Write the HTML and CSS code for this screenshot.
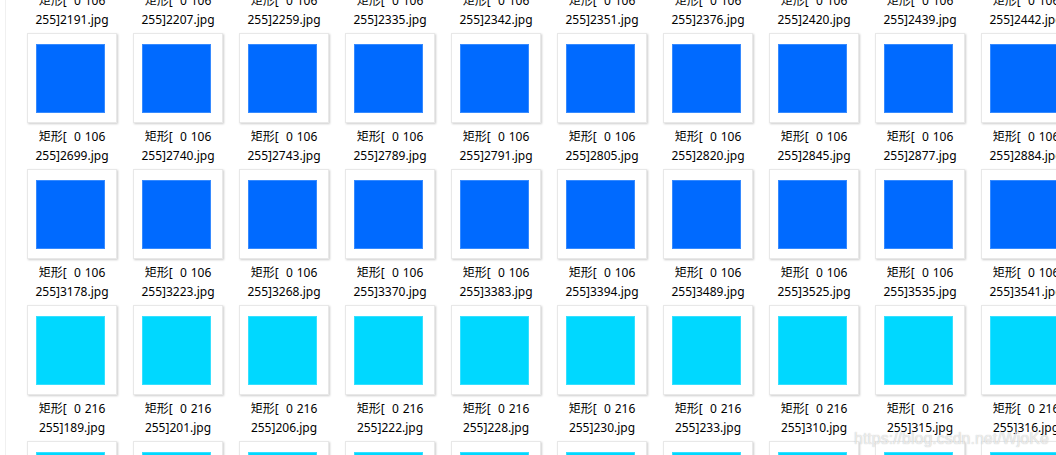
FILE: index.html
```html
<!DOCTYPE html>
<html lang="zh-CN">
<head>
<meta charset="utf-8">
<title>矩形 thumbnails</title>
<link rel="stylesheet" href="styles.css">
</head>
<body>
<div class="pane">
  <div class="grid">
    <div class="item"><div class="thumb"><div class="sq blue"></div></div><div class="label"><span>矩形[  0 106</span><span>255]2191.jpg</span></div></div>
    <div class="item"><div class="thumb"><div class="sq blue"></div></div><div class="label"><span>矩形[  0 106</span><span>255]2207.jpg</span></div></div>
    <div class="item"><div class="thumb"><div class="sq blue"></div></div><div class="label"><span>矩形[  0 106</span><span>255]2259.jpg</span></div></div>
    <div class="item"><div class="thumb"><div class="sq blue"></div></div><div class="label"><span>矩形[  0 106</span><span>255]2335.jpg</span></div></div>
    <div class="item"><div class="thumb"><div class="sq blue"></div></div><div class="label"><span>矩形[  0 106</span><span>255]2342.jpg</span></div></div>
    <div class="item"><div class="thumb"><div class="sq blue"></div></div><div class="label"><span>矩形[  0 106</span><span>255]2351.jpg</span></div></div>
    <div class="item"><div class="thumb"><div class="sq blue"></div></div><div class="label"><span>矩形[  0 106</span><span>255]2376.jpg</span></div></div>
    <div class="item"><div class="thumb"><div class="sq blue"></div></div><div class="label"><span>矩形[  0 106</span><span>255]2420.jpg</span></div></div>
    <div class="item"><div class="thumb"><div class="sq blue"></div></div><div class="label"><span>矩形[  0 106</span><span>255]2439.jpg</span></div></div>
    <div class="item"><div class="thumb"><div class="sq blue"></div></div><div class="label"><span>矩形[  0 106</span><span>255]2442.jpg</span></div></div>

    <div class="item"><div class="thumb"><div class="sq blue"></div></div><div class="label"><span>矩形[  0 106</span><span>255]2699.jpg</span></div></div>
    <div class="item"><div class="thumb"><div class="sq blue"></div></div><div class="label"><span>矩形[  0 106</span><span>255]2740.jpg</span></div></div>
    <div class="item"><div class="thumb"><div class="sq blue"></div></div><div class="label"><span>矩形[  0 106</span><span>255]2743.jpg</span></div></div>
    <div class="item"><div class="thumb"><div class="sq blue"></div></div><div class="label"><span>矩形[  0 106</span><span>255]2789.jpg</span></div></div>
    <div class="item"><div class="thumb"><div class="sq blue"></div></div><div class="label"><span>矩形[  0 106</span><span>255]2791.jpg</span></div></div>
    <div class="item"><div class="thumb"><div class="sq blue"></div></div><div class="label"><span>矩形[  0 106</span><span>255]2805.jpg</span></div></div>
    <div class="item"><div class="thumb"><div class="sq blue"></div></div><div class="label"><span>矩形[  0 106</span><span>255]2820.jpg</span></div></div>
    <div class="item"><div class="thumb"><div class="sq blue"></div></div><div class="label"><span>矩形[  0 106</span><span>255]2845.jpg</span></div></div>
    <div class="item"><div class="thumb"><div class="sq blue"></div></div><div class="label"><span>矩形[  0 106</span><span>255]2877.jpg</span></div></div>
    <div class="item"><div class="thumb"><div class="sq blue"></div></div><div class="label"><span>矩形[  0 106</span><span>255]2884.jpg</span></div></div>

    <div class="item"><div class="thumb"><div class="sq blue"></div></div><div class="label"><span>矩形[  0 106</span><span>255]3178.jpg</span></div></div>
    <div class="item"><div class="thumb"><div class="sq blue"></div></div><div class="label"><span>矩形[  0 106</span><span>255]3223.jpg</span></div></div>
    <div class="item"><div class="thumb"><div class="sq blue"></div></div><div class="label"><span>矩形[  0 106</span><span>255]3268.jpg</span></div></div>
    <div class="item"><div class="thumb"><div class="sq blue"></div></div><div class="label"><span>矩形[  0 106</span><span>255]3370.jpg</span></div></div>
    <div class="item"><div class="thumb"><div class="sq blue"></div></div><div class="label"><span>矩形[  0 106</span><span>255]3383.jpg</span></div></div>
    <div class="item"><div class="thumb"><div class="sq blue"></div></div><div class="label"><span>矩形[  0 106</span><span>255]3394.jpg</span></div></div>
    <div class="item"><div class="thumb"><div class="sq blue"></div></div><div class="label"><span>矩形[  0 106</span><span>255]3489.jpg</span></div></div>
    <div class="item"><div class="thumb"><div class="sq blue"></div></div><div class="label"><span>矩形[  0 106</span><span>255]3525.jpg</span></div></div>
    <div class="item"><div class="thumb"><div class="sq blue"></div></div><div class="label"><span>矩形[  0 106</span><span>255]3535.jpg</span></div></div>
    <div class="item"><div class="thumb"><div class="sq blue"></div></div><div class="label"><span>矩形[  0 106</span><span>255]3541.jpg</span></div></div>

    <div class="item"><div class="thumb"><div class="sq cyan"></div></div><div class="label"><span>矩形[  0 216</span><span>255]189.jpg</span></div></div>
    <div class="item"><div class="thumb"><div class="sq cyan"></div></div><div class="label"><span>矩形[  0 216</span><span>255]201.jpg</span></div></div>
    <div class="item"><div class="thumb"><div class="sq cyan"></div></div><div class="label"><span>矩形[  0 216</span><span>255]206.jpg</span></div></div>
    <div class="item"><div class="thumb"><div class="sq cyan"></div></div><div class="label"><span>矩形[  0 216</span><span>255]222.jpg</span></div></div>
    <div class="item"><div class="thumb"><div class="sq cyan"></div></div><div class="label"><span>矩形[  0 216</span><span>255]228.jpg</span></div></div>
    <div class="item"><div class="thumb"><div class="sq cyan"></div></div><div class="label"><span>矩形[  0 216</span><span>255]230.jpg</span></div></div>
    <div class="item"><div class="thumb"><div class="sq cyan"></div></div><div class="label"><span>矩形[  0 216</span><span>255]233.jpg</span></div></div>
    <div class="item"><div class="thumb"><div class="sq cyan"></div></div><div class="label"><span>矩形[  0 216</span><span>255]310.jpg</span></div></div>
    <div class="item"><div class="thumb"><div class="sq cyan"></div></div><div class="label"><span>矩形[  0 216</span><span>255]315.jpg</span></div></div>
    <div class="item"><div class="thumb"><div class="sq cyan"></div></div><div class="label"><span>矩形[  0 216</span><span>255]316.jpg</span></div></div>

    <div class="item"><div class="thumb"><div class="sq cyan"></div></div><div class="label"><span>矩形[  0 216</span><span>255]324.jpg</span></div></div>
    <div class="item"><div class="thumb"><div class="sq cyan"></div></div><div class="label"><span>矩形[  0 216</span><span>255]331.jpg</span></div></div>
    <div class="item"><div class="thumb"><div class="sq cyan"></div></div><div class="label"><span>矩形[  0 216</span><span>255]347.jpg</span></div></div>
    <div class="item"><div class="thumb"><div class="sq cyan"></div></div><div class="label"><span>矩形[  0 216</span><span>255]352.jpg</span></div></div>
    <div class="item"><div class="thumb"><div class="sq cyan"></div></div><div class="label"><span>矩形[  0 216</span><span>255]368.jpg</span></div></div>
    <div class="item"><div class="thumb"><div class="sq cyan"></div></div><div class="label"><span>矩形[  0 216</span><span>255]371.jpg</span></div></div>
    <div class="item"><div class="thumb"><div class="sq cyan"></div></div><div class="label"><span>矩形[  0 216</span><span>255]385.jpg</span></div></div>
    <div class="item"><div class="thumb"><div class="sq cyan"></div></div><div class="label"><span>矩形[  0 216</span><span>255]392.jpg</span></div></div>
    <div class="item"><div class="thumb"><div class="sq cyan"></div></div><div class="label"><span>矩形[  0 216</span><span>255]404.jpg</span></div></div>
    <div class="item"><div class="thumb"><div class="sq cyan"></div></div><div class="label"><span>矩形[  0 216</span><span>255]417.jpg</span></div></div>
  </div>
</div>
<div class="watermark">https://blog.csdn.net/WjoKe</div>
</body>
</html>
```

FILE: styles.css
```css
html, body {
  margin: 0;
  padding: 0;
  width: 1056px;
  height: 455px;
  overflow: hidden;
  background: #ffffff;
}

body {
  position: relative;
  font-family: "Noto Sans", "Noto Sans CJK SC", sans-serif;
  font-size: 12px;
  color: #000000;
}

.pane {
  margin-left: 5px;
  border-left: 1px solid #f0f0f0;
  padding-left: 13px;
  min-height: 700px;
}

.grid {
  display: grid;
  grid-template-columns: repeat(10, 106px);
  grid-auto-rows: 136px;
  margin-top: -103px;
  width: 1060px;
}

.item {
  display: flex;
  flex-direction: column;
  align-items: center;
}

.thumb {
  box-sizing: border-box;
  width: 90px;
  height: 90px;
  background: #ffffff;
  border: 1px solid #e8e8e8;
  box-shadow: 1px 1px 2px rgba(0, 0, 0, 0.2);
  padding: 10px 0 0 8px;
}

.sq {
  width: 69px;
  height: 69px;
}

.blue {
  background: rgb(0, 106, 255);
  box-shadow: inset 0 0 0 1px rgba(90, 160, 255, 0.6);
}

.cyan {
  background: rgb(0, 216, 255);
  box-shadow: inset 0 0 0 1px rgba(90, 230, 255, 0.6);
}

.label {
  margin-top: 5px;
  display: flex;
  flex-direction: column;
  align-items: center;
  line-height: 18.5px;
  white-space: pre;
  word-spacing: 0.6px;
}

.watermark {
  position: absolute;
  left: 854px;
  top: 429px;
  font-family: "Liberation Sans", Arial, sans-serif;
  font-size: 16px;
  line-height: 20px;
  color: rgba(255, 255, 255, 0.7);
  text-shadow: 0 0 1px rgba(120, 120, 120, 0.55);
  white-space: nowrap;
}
```
